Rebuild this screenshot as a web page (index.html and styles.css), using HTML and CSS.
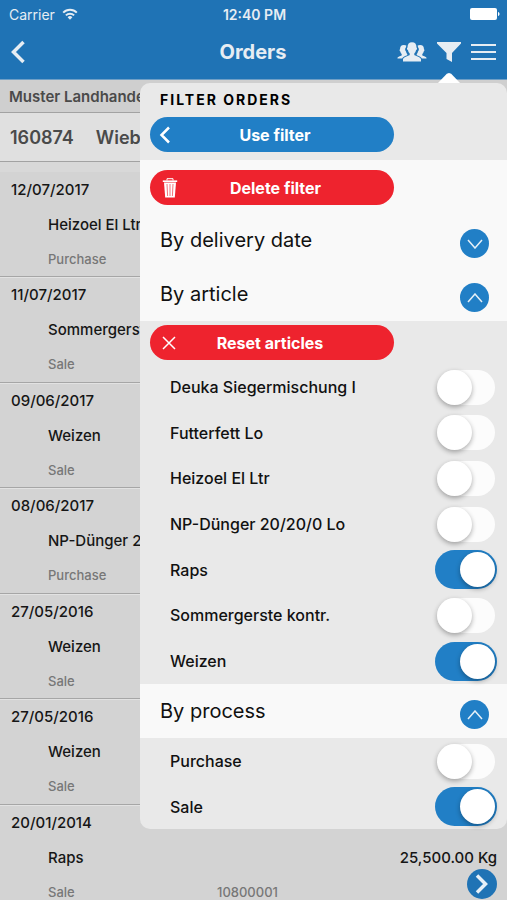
FILE: index.html
```html
<!DOCTYPE html>
<html lang="en">
<head>
<meta charset="utf-8">
<meta name="viewport" content="width=device-width, initial-scale=1">
<title>Orders</title>
<link rel="stylesheet" href="styles.css">
</head>
<body>
<div class="app">
  <header class="top">
    <div class="status">
      <div class="carrier">Carrier
        <svg width="16" height="12" viewBox="0 0 16 12" fill="none" stroke="currentColor" stroke-width="2"><path d="M1.2 4.6a9.6 9.6 0 0 1 13.6 0M3.9 7.4a5.8 5.8 0 0 1 8.2 0"/><path d="M5.6 9.3a3.4 3.4 0 0 1 4.8 0L8 11.8z" fill="currentColor" stroke="none"/></svg>
      </div>
      <div class="clock">12:40 PM</div>
      <div class="battery"><svg width="30" height="12" viewBox="0 0 30 12" fill="currentColor"><rect width="27" height="12" rx="2"/><path d="M28 4c2 .4 2 3.600 0 4z"/></svg></div>
    </div>
    <nav class="bar">
      <button class="icon-button back" aria-label="Back"><svg width="16" height="24" viewBox="0 0 16 24" fill="none" stroke="currentColor" stroke-width="3.500"><path d="M13.500 2 3.500 12l10 10"/></svg></button>
      <h1>Orders</h1>
      <div class="actions">
        <button class="icon-button" aria-label="Contacts"><svg width="30" height="20" viewBox="0 0 30 20" fill="currentColor"><path d="M10.500 5.500C10.500 2 12 .3 15 .3s4.500 1.700 4.500 5.200c.9.200.6 2.400-.5 2.800-.3 1.500-.9 2.500-1.700 3.200v1.600c0 .6 6.700 2 6.700 4.200v2.200H6v-2.200c0-2.200 6.700-3.600 6.700-4.200v-1.600c-.8-.7-1.400-1.700-1.700-3.200-1.100-.4-1.400-2.600-.5-2.800z"/><path d="M9.300 3.600C8.700 3.200 8 3 6.900 3 4.300 3 3 4.500 3 7.300c-.7.300-.5 1.900.3 2.300.2 1.200.7 2 1.400 2.500v1.100C4.700 13.800.5 14.500.5 16v.500h4.600c.6-1.600 3.400-2.400 5.200-3.200v-1c-.7-.8-1-1.700-1.300-2.800C7.900 8.500 7.800 6.200 9 5.200zM20.700 3.600C21.300 3.200 22 3 23.100 3 25.700 3 27 4.500 27 7.300c.7.300.5 1.900-.3 2.300-.2 1.200-.7 2-1.400 2.500v1.100c0 .6 4.200 1.300 4.200 2.800v.500h-4.600c-.6-1.600-3.400-2.400-5.200-3.200v-1c.7-.8 1-1.700 1.300-2.800 1.100-1 1.200-3.300 0-4.300z"/></svg></button>
        <button class="icon-button" aria-label="Filter"><svg width="24" height="20" viewBox="0 0 24 20" fill="currentColor"><path d="M0 0h24v1.500L15 11v9l-5.500-3v-6L0 1.500z"/></svg></button>
        <button class="icon-button" aria-label="Menu"><svg width="25" height="16" viewBox="0 0 25 16" fill="currentColor"><path d="M0 0h25v2H0zM0 7h25v2H0zM0 14h25v2H0z"/></svg></button>
      </div>
    </nav>
  </header>

  <main class="content">
    <h2 class="company">Muster Landhandel</h2>
    <div class="customer"><span>160874</span><span>Wiebl</span></div>
    <ul class="orders">
      <li><time>12/07/2017</time><span class="article">Heizoel El Ltr</span><span class="kind">Purchase</span></li>
      <li><time>11/07/2017</time><span class="article">Sommergerste kontr.</span><span class="kind">Sale</span></li>
      <li><time>09/06/2017</time><span class="article">Weizen</span><span class="kind">Sale</span></li>
      <li><time>08/06/2017</time><span class="article">NP-Dünger 20/20/0 Lo</span><span class="kind">Purchase</span></li>
      <li><time>27/05/2016</time><span class="article">Weizen</span><span class="kind">Sale</span></li>
      <li><time>27/05/2016</time><span class="article">Weizen</span><span class="kind">Sale</span></li>
      <li><time>20/01/2014</time><span class="article">Raps</span><span class="amount">25,500.00 Kg</span><span class="kind">Sale</span><span class="number">10800001</span>
        <button class="round open" aria-label="Open order"><svg width="14" height="20" viewBox="0 0 14 20" fill="none" stroke="currentColor" stroke-width="3.500"><path d="m2 1.500 8.500 8.500L2 18.500"/></svg></button></li>
    </ul>
  </main>

  <section class="filter">
    <div class="filter-head">
      <h2>Filter orders</h2>
      <button class="pill use"><svg width="12" height="18" viewBox="0 0 12 18" fill="none" stroke="currentColor" stroke-width="2.500"><path d="M10 1.500 2.500 9l7.500 7.500"/></svg><span>Use filter</span></button>
    </div>
    <div class="groups first">
      <button class="pill danger"><svg width="16" height="20" viewBox="0 0 16 20" fill="none" stroke="currentColor"><path d="M5 2.500V.7h6v1.800" stroke-width="1"/><path d="M.8 3.200h14.400" stroke-width="1.600"/><path d="M2 4.500h12L12.800 19.500H3.200z" fill="currentColor" stroke="none"/><path d="m5 6 .6 12M8 6v12M11 6l-.6 12" stroke="#f4757c"/></svg><span>Delete filter</span></button>
      <div class="group"><h3>By delivery date</h3><button class="round" aria-label="Expand delivery date"><svg width="16" height="10" viewBox="0 0 16 10" fill="none" stroke="currentColor" stroke-width="1.500"><path d="m1 1 7 8 7-8"/></svg></button></div>
      <div class="group"><h3>By article</h3><button class="round" aria-label="Collapse article"><svg width="16" height="10" viewBox="0 0 16 10" fill="none" stroke="currentColor" stroke-width="1.500"><path d="m1 9 7-8 7 8"/></svg></button></div>
    </div>
    <div class="reset">
      <button class="pill danger close"><svg width="14" height="14" viewBox="0 0 14 14" fill="none" stroke="currentColor" stroke-width="1.500"><path d="m1 1 12 12M13 1 1 13"/></svg><span>Reset articles</span></button>
    </div>
    <div class="options">
      <label><span>Deuka Siegermischung I</span><input type="checkbox"></label>
      <label><span>Futterfett Lo</span><input type="checkbox"></label>
      <label><span>Heizoel El Ltr</span><input type="checkbox"></label>
      <label><span>NP-Dünger 20/20/0 Lo</span><input type="checkbox"></label>
      <label><span>Raps</span><input type="checkbox" checked></label>
      <label><span>Sommergerste kontr.</span><input type="checkbox"></label>
      <label><span>Weizen</span><input type="checkbox" checked></label>
    </div>
    <div class="groups">
      <div class="group"><h3>By process</h3><button class="round" aria-label="Collapse process"><svg width="16" height="10" viewBox="0 0 16 10" fill="none" stroke="currentColor" stroke-width="1.500"><path d="m1 9 7-8 7 8"/></svg></button></div>
    </div>
    <div class="options">
      <label><span>Purchase</span><input type="checkbox"></label>
      <label><span>Sale</span><input type="checkbox" checked></label>
    </div>
  </section>
</div>
</body>
</html>
```

FILE: styles.css
```css
* { box-sizing: border-box; }

body {
  margin: 0;
  background: #d3d3d3;
  color: #161616;
  font-family: Inter, "Liberation Sans", sans-serif;
  font-size: 16px;
}

h1, h2, h3, ul { margin: 0; padding: 0; }
svg { display: block; flex: none; }

button {
  border: 0;
  padding: 0;
  font: inherit;
  color: inherit;
  background: none;
}

.app {
  position: relative;
  height: 100vh;
  overflow: hidden;
}

/* Header */
.top {
  background: #1f73b5;
  color: #e6edf3;
  border-bottom: 1px solid #6f9fc6;
}

.status {
  display: grid;
  grid-template-columns: 1fr auto 1fr;
  align-items: center;
  height: 28px;
  padding: 0 7px 0 9px;
  font-size: 14px;
}

.carrier { display: flex; align-items: center; gap: 7px; }
.clock { font-weight: 600; }
.battery { justify-self: end; color: #fff; }

.bar {
  display: grid;
  grid-template-columns: 1fr auto 1fr;
  align-items: center;
  height: 51px;
  padding: 0 11px 4px 10px;
}

.bar h1 { font-size: 20px; font-weight: 700; line-height: 28px; }
.back { justify-self: start; }
.actions { display: flex; align-items: center; justify-content: flex-end; gap: 10px; }

/* Order list */
.company {
  height: 33px;
  padding: 0 9px;
  border-bottom: 1px solid #a2a2a2;
  font-size: 15px;
  font-weight: 600;
  line-height: 33px;
  color: #4a4a4a;
  background: #cfcfcf;
}

.customer {
  display: flex;
  gap: 22px;
  height: 49px;
  padding: 0 10px;
  border-bottom: 1px solid #a2a2a2;
  font-size: 18px;
  font-weight: 600;
  line-height: 49px;
  color: #4a4a4a;
  background: #e0e0e0;
}

.orders { list-style: none; border-top: 10px solid #d8d8d8; }

.orders li {
  display: grid;
  grid-template-columns: 169px 1fr auto;
  grid-template-rows: 35px 35px 33px;
  align-items: center;
  height: 105px;
  padding: 0 10px 0 48px;
  border-bottom: 1px solid #a6a6a6;
  box-shadow: 0 1px #e2e2e2;
}

.orders li:nth-child(even) { height: 106px; }
.orders time { grid-column: 1 / -1; margin-left: -37px; }
.orders span { white-space: nowrap; }
.article { grid-column: 1; }
.amount { grid-column: 2 / -1; justify-self: end; }
.kind { grid-column: 1; }
.kind, .number { font-size: 13px; font-weight: 500; color: #777; }
.orders time, .article, .amount { font-size: 15px; font-weight: 500; }

.round {
  display: grid;
  place-items: center;
  width: 29px;
  height: 29px;
  border-radius: 50%;
  background: #217fc6;
  color: #e6f0f8;
}

.open { align-self: start; width: 30px; height: 30px; margin-top: -6px; background: #1f73b5; }

/* Filter popover */
.filter {
  position: absolute;
  top: 83px;
  left: 140px;
  right: 0;
  border-radius: 10px;
  background: #e9e9e9;
  color: #111;
}

.filter::before {
  content: "";
  position: absolute;
  top: -10px;
  right: 47px;
  width: 22px;
  height: 10px;
  background: #fff;
  clip-path: polygon(0 100%, 40% 8%, 50% 0, 60% 8%, 100% 100%);
}

.filter-head { padding: 0 10px 8px; }

.filter-head h2 {
  padding-left: 10px;
  font-size: 14px;
  font-weight: 700;
  line-height: 34px;
  letter-spacing: 2px;
  text-transform: uppercase;
  color: #000;
}

.pill {
  display: flex;
  align-items: center;
  width: 244px;
  height: 35px;
  padding: 0 15px 0 9px;
  border-radius: 18px;
  font-size: 16px;
  font-weight: 700;
  color: #fff;
}

.pill span { flex: 1; }
.use { background: #217fc6; }
.danger { padding: 0 21px 0 12px; background: #ee232e; }
.close { padding-right: 30px; }

.groups { background: #f9f9f9; }
.first { padding-top: 10px; }
.first .pill { margin: 0 10px 8px; }

.group {
  display: flex;
  align-items: center;
  justify-content: space-between;
  height: 54px;
  padding: 0 18px 0 20px;
}

.group h3 { font-size: 20px; font-weight: 400; }
.group .round { margin-top: 7px; }
.reset { padding: 4px 10px; }

.options label {
  display: flex;
  align-items: center;
  justify-content: space-between;
  height: 46px;
  padding: 0 10px 0 30px;
  font-weight: 500;
}

.options label:nth-child(3n + 2) { height: 45px; }

.options input {
  appearance: none;
  position: relative;
  width: 62px;
  height: 39px;
  margin: 0;
  border: 2px solid transparent;
  border-radius: 20px;
  background: #fcfcfc padding-box;
}

.options input::before {
  content: "";
  position: absolute;
  top: 0;
  left: 0;
  width: 35px;
  height: 35px;
  border-radius: 50%;
  background: #fff;
  box-shadow: 0 2px 5px rgba(0, 0, 0, 0.32);
}

.options input:checked { background: #217fc6 border-box; }
.options input:checked::before { left: 23px; }
```
